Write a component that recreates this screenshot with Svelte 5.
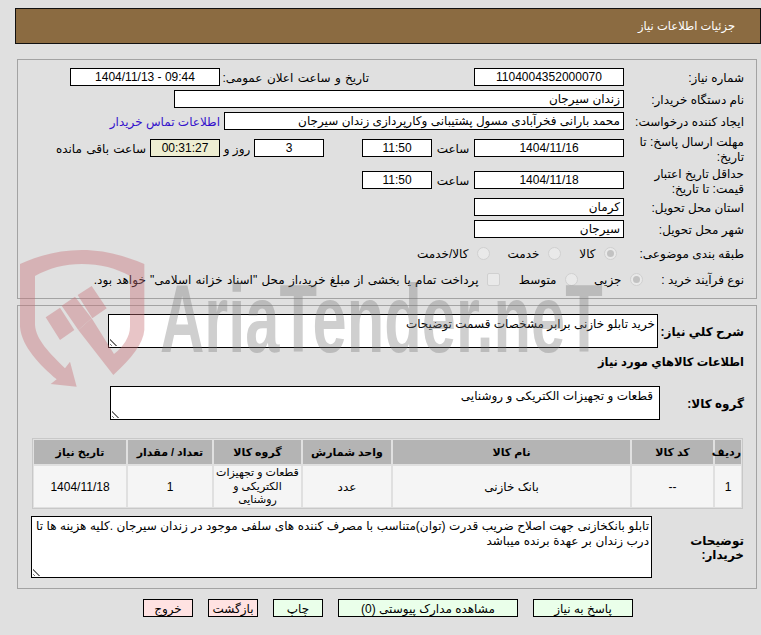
<script>
  const rows = [
    { id: 1, code: '--', name: 'بانک خازنی', unit: 'عدد', group: 'قطعات و تجهیزات\nالکتریکی و\nروشنایی', qty: '1', date: '1404/11/18' }
  ];
</script>

<div class="page" dir="rtl">
  <header class="title"><span>جزئیات اطلاعات نیاز</span></header>

  <section class="panel top">
    <div class="row r1">
      <div class="lab">شماره نیاز:</div>
      <div class="box c w150">1104004352000070</div>
      <div class="lab2">تاریخ و ساعت اعلان عمومی:</div>
      <div class="box c w150" dir="ltr">1404/11/13 - 09:44</div>
    </div>
    <div class="row r2">
      <div class="lab">نام دستگاه خریدار:</div>
      <div class="box w450">زندان سیرجان</div>
    </div>
    <div class="row r3">
      <div class="lab">ایجاد کننده درخواست:</div>
      <div class="box w400">محمد بارانی فخرآبادی مسول پشتیبانی وکارپردازی زندان سیرجان</div>
      <a class="link" href="#top">اطلاعات تماس خریدار</a>
    </div>
    <div class="row r4">
      <div class="lab">مهلت ارسال پاسخ: تا تاریخ:</div>
      <div class="box c w150">1404/11/16</div>
      <span class="t saat">ساعت</span>
      <div class="box c w70">11:50</div>
      <div class="box c w70 days">3</div>
      <span class="t roz">روز و</span>
      <div class="box c w70 timer">00:31:27</div>
      <span class="t rest">ساعت باقی مانده</span>
    </div>
    <div class="row r5">
      <div class="lab">حداقل تاریخ اعتبار قیمت: تا تاریخ:</div>
      <div class="box c w150">1404/11/18</div>
      <span class="t saat">ساعت</span>
      <div class="box c w70">11:50</div>
    </div>
    <div class="row r6">
      <div class="lab">استان محل تحویل:</div>
      <div class="box w150">کرمان</div>
    </div>
    <div class="row r7">
      <div class="lab">شهر محل تحویل:</div>
      <div class="box w150">سیرجان</div>
    </div>
    <div class="row r8">
      <div class="lab">طبقه بندی موضوعی:</div>
      <div class="choices cat">
        <div class="opt o56"><span class="radio on"></span><span class="t">کالا</span></div>
        <div class="opt o71"><span class="radio"></span><span class="t">خدمت</span></div>
        <div class="opt"><span class="radio"></span><span class="t">کالا/خدمت</span></div>
      </div>
    </div>
    <div class="row r9">
      <div class="lab">نوع فرآیند خرید :</div>
      <div class="choices kind">
        <div class="opt o65"><span class="radio on"></span><span class="t">جزیی</span></div>
        <div class="opt o78"><span class="radio"></span><span class="t">متوسط</span></div>
        <div class="opt"><span class="check"></span><span class="t long">پرداخت تمام یا بخشی از مبلغ خرید،از محل "اسناد خزانه اسلامی" خواهد بود.</span></div>
      </div>
    </div>
  </section>

  <section class="panel bottom">
    <div class="row s1">
      <div class="blab">شرح کلي نياز:</div>
      <div class="area a1">خرید تابلو خازنی برابر مشخصات قسمت توضیحات<i class="grip"></i></div>
    </div>
    <div class="sub">اطلاعات کالاهاي مورد نياز</div>
    <div class="row s2">
      <div class="blab">گروه کالا:</div>
      <div class="area a2">قطعات و تجهیزات الکتریکی و روشنایی<i class="grip"></i></div>
    </div>
    <table>
      <thead>
        <tr><th class="k1">ردیف</th><th class="k2">کد کالا</th><th class="k3">نام کالا</th><th class="k4">واحد شمارش</th><th class="k5">گروه کالا</th><th class="k6">تعداد / مقدار</th><th class="k7">تاریخ نیاز</th></tr>
      </thead>
      <tbody>
        {#each rows as r (r.id)}
          <tr><td>{r.id}</td><td>{r.code}</td><td>{r.name}</td><td>{r.unit}</td><td class="grp">{r.group}</td><td>{r.qty}</td><td>{r.date}</td></tr>
        {/each}
      </tbody>
    </table>
    <div class="row s3">
      <div class="blab">توضیحات خریدار:</div>
      <div class="area a3">تابلو بانکخازنی جهت اصلاح ضریب قدرت (توان)متناسب با مصرف کننده های سلفی موجود در زندان سیرجان .کلیه هزینه ها تا درب زندان بر عهدة برنده میباشد<i class="grip"></i></div>
    </div>
  </section>

  <div class="buttons">
    <button class="g b1">پاسخ به نیاز</button>
    <button class="g b2">مشاهده مدارک پیوستی (0)</button>
    <button class="g b3">چاپ</button>
    <button class="red b3">بازگشت</button>
    <button class="red b3">خروج</button>
  </div>

  <div class="mark" dir="ltr" aria-hidden="true">
    <svg class="shield" viewBox="0 0 450 510" width="150" height="170">
      <path d="M30 72 C90 45 150 30 215 30 C285 30 345 48 403 72 L403 270 C400 310 365 355 310 405 L205 270 L245 235 L312 342 C340 320 360 290 360 260 L360 108 C320 85 270 72 215 72 C165 72 115 85 75 108 L75 255 C78 300 120 340 165 385 L180 365 L200 440 L122 432 L140 418 C90 375 35 320 30 260 Z"/>
      <path d="M107 232 L150 203 L193 270 L150 300 Z M155 197 L195 170 L245 235 L205 270 Z M203 165 L245 138 L290 205 L247 235 Z"/>
    </svg>
    <span class="word">AriaTender.neT</span>
  </div>
</div>

<style>
  :global(body) { margin: 0; background: #e0e0e0; }
  .page {
    position: relative; width: 761px; height: 635px; overflow: hidden; box-sizing: border-box;
    background: #e0e0e0; padding: 8px 0 0 0; color: #000;
    font: 12px/15px "Liberation Sans", "DejaVu Sans", sans-serif;
  }
  .title {
    box-sizing: border-box; height: 36px; margin-left: 15px; background: #8b6b41; border: 1px solid #111;
    color: #fff; display: flex; align-items: center; padding-right: 25px; font-size: 11.5px;
  }
  .panel { box-sizing: border-box; margin: 0 4px 0 17px; border: 1px solid #a3a3a3; }
  .top { margin-top: 15px; height: 240px; padding-top: 8px; }
  .bottom { margin-top: 6px; height: 284px; padding-top: 8px; }
  .row { display: flex; align-items: center; height: 18px; }
  .lab { box-sizing: border-box; width: 132px; padding: 3px 12px 0 0; flex: none; }
  .box {
    box-sizing: border-box; height: 18px; border: 1px solid #000; background: #fff; padding: 0 3px; flex: none;
    line-height: 16px; white-space: nowrap; overflow: hidden;
  }
  .c { text-align: center; }
  .w150 { width: 150px; }
  .w70 { width: 70px; }
  .w450 { width: 450px; }
  .w400 { width: 400px; }
  .lab2 { box-sizing: border-box; margin-right: 105px; width: 149px; flex: none; white-space: nowrap; padding-top: 3px; word-spacing: 1.1px; }
  .r2, .r3, .r7 { margin-top: 4px; }
  .link { color: #3311cc; text-decoration: none; margin-right: 4px; white-space: nowrap; padding-top: 2px; }
  .r4 { margin-top: 9px; }
  .r5 { margin-top: 14px; }
  .r6 { margin-top: 9px; }
  .r8 { margin-top: 6px; }
  .r9 { margin-top: 8px; }
  .t { white-space: nowrap; padding-top: 3px; }
  .saat { width: 42px; flex: none; text-align: center; }
  .days { margin-right: 38px; }
  .roz { width: 34px; flex: none; text-align: center; }
  .timer { background: #eeeed2; }
  .rest { margin-right: 4px; word-spacing: 1px; }
  .choices { display: flex; align-items: center; }
  .cat { margin-right: 7.5px; }
  .kind { margin-right: -18.5px; }
  .opt { display: flex; align-items: center; gap: 8px; flex: none; }
  .o56 { width: 56px; }
  .o71 { width: 71px; }
  .o65 { width: 65px; }
  .o78 { width: 78px; }
  .radio { width: 13px; height: 13px; flex: none; border-radius: 50%; border: 1px solid #d0d0d0; background: #e9e9e9; box-sizing: border-box; position: relative; }
  .radio.on::after { content: ""; position: absolute; inset: 2px; border-radius: 50%; background: #c2c2c2; }
  .check { width: 13px; height: 13px; flex: none; border: 1px solid #d0d0d0; border-radius: 2px; background: #e9e9e9; box-sizing: border-box; }
  .long { word-spacing: 0.9px; }
  .blab { box-sizing: border-box; padding-right: 12px; font-weight: bold; flex: none; }
  .area { box-sizing: border-box; position: relative; border: 1px solid #000; background: #fff; padding: 2px; flex: none; }
  .grip {
    position: absolute; left: 1px; bottom: 1px; width: 8px; height: 8px;
    background: repeating-linear-gradient(45deg, transparent 0 1px, #777 1px 2px, transparent 2px 3px);
    clip-path: polygon(0 0, 100% 100%, 0 100%);
  }
  .s1 { height: 34px; }
  .s1 .blab { width: 98px; padding-top: 2px; }
  .a1 { width: 550px; height: 34px; }
  .sub { font-weight: bold; font-size: 11.5px; margin: 7px 12px 0 0; }
  .s2 { margin-top: 16px; height: 34px; }
  .s2 .blab { width: 96px; padding-top: 2px; }
  .a2 { width: 550px; height: 34px; padding-right: 6px; }
  table {
    width: 711px; margin: 18px 13px 0 0; border-collapse: separate; border-spacing: 2px; border: 0;
    table-layout: fixed; box-shadow: inset 0 0 0 1px #c8c8c8;
  }
  th { background: #b4b4b4; height: 24px; padding: 0; font-weight: bold; font-size: 11px; }
  td { background: #f5f5f5; height: 41px; padding: 0 1px; text-align: center; line-height: 14px; }
  td.grp { padding: 0; font-size: 11px; line-height: 13.5px; white-space: pre; }
  .k1 { width: 26px; } .k2 { width: 81px; } .k3 { width: 237px; } .k4 { width: 88px; }
  .k5 { width: 87px; } .k6 { width: 84px; } .k7 { width: 92px; }
  .s3 { margin-top: 7px; height: 62px; }
  .s3 .blab { width: 104px; padding-left: 20px; padding-top: 2px; line-height: 14px; }
  .a3 { width: 621px; height: 62px; line-height: 15px; word-spacing: 0.2px; }
  .buttons { display: flex; gap: 15px; margin-top: 10px; padding-right: 128px; }
  button {
    box-sizing: border-box; height: 18px; border: 1px solid #000; padding: 2px 0 0; margin: 0;
    font: inherit; line-height: 14px; color: #000; flex: none;
  }
  .g { background: #eaffea; }
  .red { background: #ffe2e2; }
  .b1 { width: 100px; }
  .b2 { width: 180px; }
  .b3 { width: 50px; }
  .mark { position: absolute; inset: 0; pointer-events: none; }
  .shield { position: absolute; left: 10px; top: 240px; fill: #c87076; opacity: 0.4; }
  .word {
    position: absolute; left: 160px; top: 271px; color: #777; opacity: 0.35; font: bold 96px/96px "Liberation Sans", sans-serif;
    transform-origin: 0 0; transform: scaleX(0.64); white-space: nowrap;
  }
</style>
